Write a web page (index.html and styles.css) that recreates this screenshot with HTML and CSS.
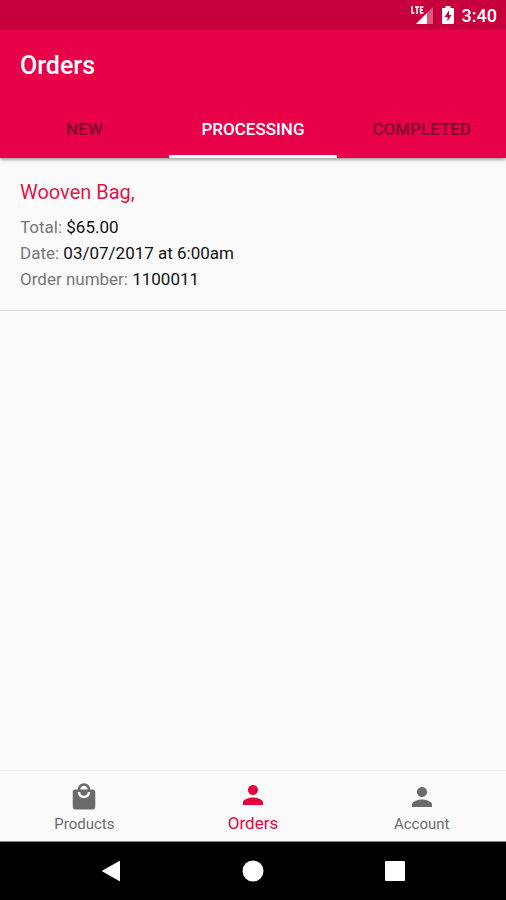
FILE: index.html
```html
<!DOCTYPE html>
<html lang="en">
<head>
<meta charset="utf-8">
<meta name="viewport" content="width=device-width, initial-scale=1">
<title>Orders</title>
<link rel="stylesheet" href="styles.css">
</head>
<body>
<div class="screen">
  <header class="app-bar">
    <div class="status-bar">
      <svg class="signal" viewBox="0 0 24 20" aria-hidden="true">
        <path d="M23 2v17H6z" fill="#fff" fill-opacity=".35"/>
        <path d="M17 8v11H6z" fill="#fff"/>
        <path d="M2 1v7h2.500M5 2h4M7 2v7M13.500 2h-3v6h3M10.500 5h2.500" fill="none" stroke="#fff" stroke-width="1.500"/>
      </svg>
      <svg class="battery" viewBox="0 0 12 20" aria-hidden="true">
        <path d="M3.500 1h5v2H11q1 0 1 1v14q0 1-1 1H1q-1 0-1-1V4q0-1 1-1h2.500z" fill="#fff"/>
        <path d="M7 5.500 2.500 12H5.500v4.500L9.500 10H7z" fill="#c5003c"/>
      </svg>
      <time class="clock">3:40</time>
    </div>
    <h1 class="title">Orders</h1>
    <nav class="tabs" aria-label="Order status">
      <button class="tab" type="button">NEW</button>
      <button class="tab tab-active" type="button" aria-current="true">PROCESSING</button>
      <button class="tab" type="button">COMPLETED</button>
    </nav>
  </header>

  <main class="orders">
    <article class="order">
      <h2 class="order-name">Wooven Bag,</h2>
      <p class="order-line">Total: <span class="value">$65.00</span></p>
      <p class="order-line">Date: <span class="value">03/07/2017 at 6:00am</span></p>
      <p class="order-line">Order number: <span class="value">1100011</span></p>
    </article>
  </main>

  <nav class="bottom-nav" aria-label="Main">
    <a class="nav-item" href="#products">
      <svg class="nav-icon" viewBox="0 0 24 24" aria-hidden="true"><path d="M19 6h-2c0-2.760-2.240-5-5-5S7 3.240 7 6H5c-1.100 0-2 .9-2 2v12c0 1.100.9 2 2 2h14c1.100 0 2-.9 2-2V8c0-1.100-.9-2-2-2zm-7-3c1.660 0 3 1.340 3 3H9c0-1.660 1.340-3 3-3zm0 10c-2.760 0-5-2.240-5-5h2c0 1.660 1.340 3 3 3s3-1.340 3-3h2c0 2.760-2.240 5-5 5z"/></svg>
      <span>Products</span>
    </a>
    <a class="nav-item nav-active" href="#orders" aria-current="page">
      <svg class="nav-icon" viewBox="0 0 24 24" aria-hidden="true"><path d="M12 12c2.210 0 4-1.790 4-4s-1.790-4-4-4-4 1.790-4 4 1.790 4 4 4zm0 2c-2.670 0-8 1.340-8 4v2h16v-2c0-2.660-5.330-4-8-4z"/></svg>
      <span>Orders</span>
    </a>
    <a class="nav-item" href="#account">
      <svg class="nav-icon" viewBox="0 0 24 24" aria-hidden="true"><path d="M12 12c2.210 0 4-1.790 4-4s-1.790-4-4-4-4 1.790-4 4 1.790 4 4 4zm0 2c-2.670 0-8 1.340-8 4v2h16v-2c0-2.660-5.330-4-8-4z"/></svg>
      <span>Account</span>
    </a>
  </nav>

  <div class="system-nav">
    <button class="system-button" type="button" aria-label="Back"><svg viewBox="0 0 24 24"><path d="M21 2.500v19q0 .8-.8.4L3.500 12.500q-.8-.5 0-1L20.200 2q.8-.4.8.5z"/></svg></button>
    <button class="system-button" type="button" aria-label="Home"><svg viewBox="0 0 24 24"><circle cx="12" cy="12" r="10.500"/></svg></button>
    <button class="system-button" type="button" aria-label="Recent apps"><svg viewBox="0 0 24 24"><rect x="2" y="2" width="20" height="20" rx="1"/></svg></button>
  </div>
</div>
</body>
</html>
```

FILE: styles.css
```css
* {
  box-sizing: border-box;
}

body {
  margin: 0;
  background: #fafafa;
  color: #111;
  font-family: Roboto, "Liberation Sans", sans-serif;
}

h1, h2, p {
  margin: 0;
}

button {
  border: 0;
  padding: 0;
  background: none;
  font: inherit;
}

svg {
  display: block;
}

.screen {
  display: flex;
  flex-direction: column;
  min-height: 100vh;
}

.app-bar {
  background: #e80048;
  color: #fff;
  box-shadow: 0 1px 4px rgba(0, 0, 0, 0.5);
}

.status-bar {
  display: flex;
  align-items: center;
  justify-content: flex-end;
  height: 30px;
  padding: 0 9px;
  background: #c5003c;
}

.signal {
  width: 24px;
  height: 20px;
}

.battery {
  width: 12px;
  height: 20px;
  margin: 0 8px;
}

.clock {
  font-size: 18px;
  font-weight: 500;
}

.title {
  padding: 0 20px;
  font-size: 25px;
  font-weight: 500;
  line-height: 72px;
}

.tabs {
  display: flex;
}

.tab {
  flex: 1;
  height: 56px;
  border-bottom: 3px solid transparent;
  color: #7d0629;
  font-size: 17px;
  font-weight: 500;
}

.tab-active {
  border-color: #fff;
  color: #fff;
}

.orders {
  flex: 1;
}

.order {
  padding: 20px 20px 18px;
  border-bottom: 1px solid #e0e0e0;
}

.order-name {
  margin-bottom: 8px;
  color: #e01646;
  font-size: 20px;
  font-weight: 400;
  line-height: 28px;
}

.order-line {
  color: #777;
  font-size: 17px;
  line-height: 26px;
}

.value {
  color: #111;
}

.bottom-nav {
  display: flex;
  height: 72px;
  border-top: 1px solid #eee;
  border-bottom: 1px solid #888;
}

.nav-item {
  display: flex;
  flex: 1;
  flex-direction: column;
  align-items: center;
  padding-top: 11px;
  color: #6b6b6b;
  font-size: 15px;
  line-height: 24px;
  text-decoration: none;
}

.nav-active {
  padding-top: 9px;
  color: #e4033f;
  font-size: 17px;
  line-height: 26px;
}

.nav-icon {
  width: 30px;
  height: 30px;
  fill: currentColor;
}

.system-nav {
  display: flex;
  align-items: center;
  justify-content: center;
  height: 58px;
  background: #000;
}

.system-button {
  display: flex;
  flex: 0 0 28%;
  justify-content: center;
}

.system-button svg {
  width: 24px;
  height: 24px;
  fill: #fff;
}
```
